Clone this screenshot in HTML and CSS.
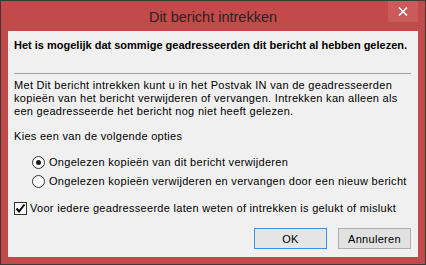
FILE: index.html
```html
<!DOCTYPE html>
<html lang="nl">
<head>
    <meta charset="UTF-8">
    <meta name="viewport" content="width=device-width, initial-scale=1.0">
    <title>Dit bericht intrekken</title>
    <link rel="stylesheet" href="styles.css">
</head>
<body>

    <!-- Dialoogvenster -->
    <div class="window">
        <div class="titlebar">
            <span></span>
            <div class="title">Dit bericht intrekken</div>
            <div class="close">
                <svg width="10" height="9" viewBox="0 0 10 9">
                    <path d="M1 0.5 L9 8.5 M9 0.5 L1 8.5" stroke="#fff" stroke-width="1.6"/>
                </svg>
            </div>
        </div>

        <div class="content">
            <p class="lead">Het is mogelijk dat sommige geadresseerden dit bericht al hebben gelezen.</p>
            <div class="rule"></div>
            <p class="info">Met Dit bericht intrekken kunt u in het Postvak IN van de geadresseerden<br>
                kopieën van het bericht verwijderen of vervangen. Intrekken kan alleen als<br>
                een geadresseerde het bericht nog niet heeft gelezen.</p>
            <p class="choose">Kies een van de volgende opties</p>

            <div class="options">
                <label class="option">
                    <span class="radio checked"></span>
                    Ongelezen kopieën van dit bericht verwijderen
                </label>
                <label class="option">
                    <span class="radio"></span>
                    Ongelezen kopieën verwijderen en vervangen door een nieuw bericht
                </label>
            </div>

            <label class="check-row">
                <span class="checkbox">
                    <svg width="11" height="11" viewBox="0 0 11 11">
                        <path d="M1.5 5.5 L4 8.5 L9.5 1.5" fill="none" stroke="#000" stroke-width="2"/>
                    </svg>
                </span>
                Voor iedere geadresseerde laten weten of intrekken is gelukt of mislukt
            </label>

            <div class="buttons">
                <button class="btn btn-default">OK</button>
                <button class="btn">Annuleren</button>
            </div>
        </div>
    </div>

</body>
</html>
```

FILE: styles.css
```css
body {
    margin: 0;
    padding: 0;
    background-color: #2b2b2b;
    font-family: "Liberation Sans", Arial, sans-serif;
}

/* Venster */
.window {
    width: 426px;
    height: 265px;
    border: 1px solid #3a3a3a;
    background-color: #c24a4a;
    padding: 0 7px;
    box-sizing: border-box;
    display: flex;
    flex-direction: column;
}

.titlebar {
    height: 30px;
    display: grid;
    grid-template-columns: 1fr auto 1fr;
}

.title {
    font-size: 14.5px;
    color: #2e2222;
    line-height: 30px;
    padding-top: 1px;
}

.close {
    justify-self: end;
    width: 30px;
    height: 21px;
    background-color: #c95b5b;
    display: flex;
    align-items: center;
    justify-content: center;
}

/* Inhoud */
.content {
    height: 226px;
    background-color: #f0f0f0;
    padding: 0 7px 0 6px;
    box-sizing: border-box;
    font-size: 11px;
    line-height: 13px;
    letter-spacing: 0.3px;
    color: #000;
}

.lead {
    margin: 8px 0 0 0;
    font-weight: bold;
    letter-spacing: 0;
}

.rule {
    margin-top: 21px;
    border-top: 1px solid #a0a0a0;
}

.info {
    margin: 5px 0 0 0;
    white-space: nowrap;
}

.choose {
    margin: 12px 0 0 0;
}

.options {
    margin-top: 10px;
    padding-left: 18px;
}

.option, .check-row {
    display: flex;
    align-items: center;
    height: 19px;
    white-space: nowrap;
}

.radio {
    width: 11px;
    height: 11px;
    border: 1px solid #333;
    border-radius: 50%;
    background-color: #fff;
    margin-right: 4px;
    display: flex;
    align-items: center;
    justify-content: center;
}

.radio.checked::after {
    content: "";
    width: 5px;
    height: 5px;
    border-radius: 50%;
    background-color: #1a1a1a;
}

.check-row {
    margin-top: 8px;
}

.checkbox {
    width: 11px;
    height: 11px;
    border: 1px solid #333;
    background-color: #fff;
    margin-right: 3px;
    display: flex;
    align-items: center;
    justify-content: center;
}

/* Knoppen */
.buttons {
    margin-top: 10px;
    display: flex;
    justify-content: flex-end;
    gap: 11px;
}

.btn {
    width: 73px;
    height: 21px;
    border: 1px solid #adadad;
    background-color: #e1e1e1;
    font-family: "Liberation Sans", Arial, sans-serif;
    font-size: 11px;
    letter-spacing: 0.3px;
    color: #000;
    padding: 0;
}

.btn-default {
    border-color: #3c8fe6;
    background-color: #e5e5e5;
}
```
